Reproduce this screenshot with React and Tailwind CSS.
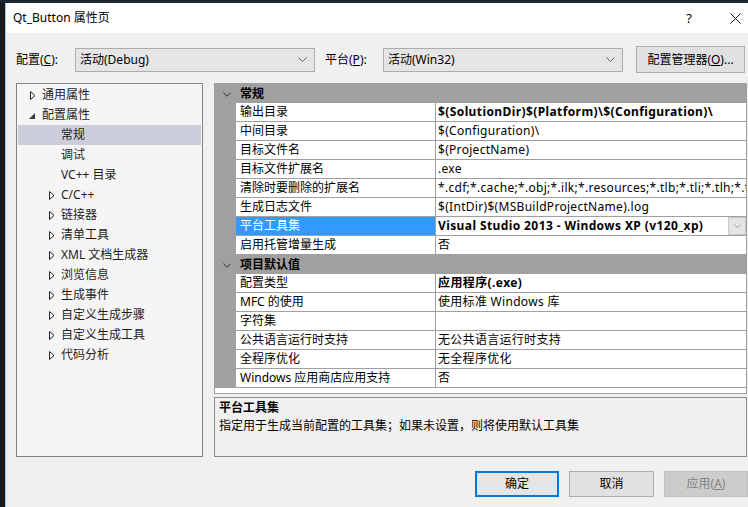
import React from "react";

const FONT = { fontFamily: '"Noto Sans", "Noto Sans CJK SC", sans-serif' };

function RightArrow() {
  return (
    <svg width="6" height="9" viewBox="0 0 6 9">
      <path d="M0.5 0.5 L5 4.5 L0.5 8.5 Z" fill="none" stroke="#262626" strokeWidth="1" />
    </svg>
  );
}

function DownArrow() {
  return (
    <svg width="6" height="6" viewBox="0 0 6 6">
      <path d="M6 0 L6 6 L0 6 Z" fill="#3c3c3c" />
    </svg>
  );
}

function Chevron({ color = "#606060", w = 9, h = 5 }) {
  return (
    <svg width={w} height={h} viewBox="0 0 9 5">
      <path d="M0.5 0.5 L4.5 4.5 L8.5 0.5" fill="none" stroke={color} strokeWidth="1" />
    </svg>
  );
}

const treeItems = [
  { level: 0, arrow: "right", text: "通用属性" },
  { level: 0, arrow: "down", text: "配置属性" },
  { level: 1, text: "常规", selected: true },
  { level: 1, text: "调试" },
  { level: 1, text: "VC++ 目录" },
  { level: 1, arrow: "right", text: "C/C++" },
  { level: 1, arrow: "right", text: "链接器" },
  { level: 1, arrow: "right", text: "清单工具" },
  { level: 1, arrow: "right", text: "XML 文档生成器" },
  { level: 1, arrow: "right", text: "浏览信息" },
  { level: 1, arrow: "right", text: "生成事件" },
  { level: 1, arrow: "right", text: "自定义生成步骤" },
  { level: 1, arrow: "right", text: "自定义生成工具" },
  { level: 1, arrow: "right", text: "代码分析" },
];

const groups = [
  {
    title: "常规",
    rows: [
      { name: "输出目录", value: "$(SolutionDir)$(Platform)\\$(Configuration)\\", bold: true },
      { name: "中间目录", value: "$(Configuration)\\" },
      { name: "目标文件名", value: "$(ProjectName)" },
      { name: "目标文件扩展名", value: ".exe" },
      {
        name: "清除时要删除的扩展名",
        value:
          "*.cdf;*.cache;*.obj;*.ilk;*.resources;*.tlb;*.tli;*.tlh;*.tmp;*.rsp;*.pgc;*.pgd;*.meta;$(TargetPath)",
      },
      { name: "生成日志文件", value: "$(IntDir)$(MSBuildProjectName).log" },
      { name: "平台工具集", value: "Visual Studio 2013 - Windows XP (v120_xp)", bold: true, selected: true },
      { name: "启用托管增量生成", value: "否" },
    ],
  },
  {
    title: "项目默认值",
    rows: [
      { name: "配置类型", value: "应用程序(.exe)", bold: true },
      { name: "MFC 的使用", value: "使用标准 Windows 库" },
      { name: "字符集", value: "" },
      { name: "公共语言运行时支持", value: "无公共语言运行时支持" },
      { name: "全程序优化", value: "无全程序优化" },
      { name: "Windows 应用商店应用支持", value: "否" },
    ],
  },
];

function Select({ text }) {
  return (
    <div className="w-[240px] h-[24px] bg-[#e5e5e5] border border-[#acacac] flex items-center pl-[4px] pr-[7px]">
      <span className="flex-1 text-[12px] leading-[18px] text-black">{text}</span>
      <Chevron />
    </div>
  );
}

function TreeRow({ item }) {
  return (
    <div
      className={
        "h-[20px] flex items-center " + (item.selected ? "bg-[#cccedb]" : "")
      }
    >
      <div className={item.level === 0 ? "w-[10px] shrink-0" : "w-[29px] shrink-0"} />
      <div className="w-[14px] shrink-0 flex items-center">
        {item.arrow === "right" && (
          <span className="pl-[2px] flex">
            <RightArrow />
          </span>
        )}
        {item.arrow === "down" && (
          <span className="pl-[1px] pt-[1px] flex">
            <DownArrow />
          </span>
        )}
      </div>
      <span className="text-[12px] leading-[18px] text-[#1e1e1e] whitespace-nowrap">{item.text}</span>
    </div>
  );
}

function GroupHeader({ title }) {
  return (
    <div className="h-[19px] bg-[#a0a0a0] flex items-center shrink-0">
      <div className="w-[21px] flex justify-center pl-[2px] pt-[1px]">
        <Chevron color="#1e1e1e" w={8} h={5} />
      </div>
      <span className="pl-[4px] text-[12px] leading-[18px] font-bold text-black">{title}</span>
    </div>
  );
}

function PropRow({ row }) {
  return (
    <div className="h-[19px] flex shrink-0">
      <div className="w-[21px] bg-[#a0a0a0] shrink-0" />
      <div
        className={
          "w-[200px] shrink-0 border-b border-r border-[#a0a0a0] flex items-center pl-[4px] overflow-hidden " +
          (row.selected ? "bg-[#3399ff] text-white" : "bg-white text-black")
        }
      >
        <span className="text-[12px] leading-[18px] whitespace-nowrap">{row.name}</span>
      </div>
      <div className="flex-1 min-w-0 border-b border-[#a0a0a0] bg-white flex items-center pl-[2px] overflow-hidden">
        <span
          className={
            "flex-1 min-w-0 text-[12px] leading-[18px] whitespace-nowrap overflow-hidden text-black " +
            (row.bold ? "font-bold tracking-[0.4px]" : "tracking-[0.3px]")
          }
        >
          {row.value}
        </span>
        {row.selected && (
          <div className="w-[18px] h-[18px] shrink-0 bg-[#e5e5e5] border border-[#c8c8c8] flex items-center justify-center">
            <Chevron color="#8a8a8a" w={7} h={4} />
          </div>
        )}
      </div>
    </div>
  );
}

export default function App() {
  return (
    <div className="w-[748px] h-[507px] overflow-hidden bg-[#1c2733] flex flex-col" style={FONT}>
      <div className="h-[3px] shrink-0 bg-[#1c2733]" />
      <div className="flex-1 flex min-h-0">
        <div className="w-[5px] shrink-0 bg-[#1b1b1b]" />
        <div className="flex-1 flex flex-col bg-[#f0f0f0] border-l border-[#9dc6ea] min-w-0">
          {/* title bar */}
          <div className="h-[30px] shrink-0 bg-white flex items-center">
            <span className="pl-[7px] text-[12px] leading-[18px] text-black flex-1">Qt_Button 属性页</span>
            <span className="text-[13px] leading-[18px] text-black">?</span>
            <svg className="ml-[38px] mr-[7px]" width="11" height="11" viewBox="0 0 11 11">
              <path d="M0.5 0.5 L10.5 10.5 M10.5 0.5 L0.5 10.5" stroke="#1e1e1e" strokeWidth="1" />
            </svg>
          </div>

          {/* config row */}
          <div className="mt-[13px] h-[27px] shrink-0 flex items-center pl-[10px] text-[12px] leading-[18px] text-black">
            <span className="w-[59px]">
              配置(<span className="underline">C</span>):
            </span>
            <Select text="活动(Debug)" />
            <span className="w-[58px] ml-[10px]">
              平台(<span className="underline">P</span>):
            </span>
            <Select text="活动(Win32)" />
            <div className="ml-[13px] w-[109px] h-[27px] bg-[#e1e1e1] border border-[#adadad] flex items-center justify-center">
              配置管理器(<span className="underline">O</span>)...
            </div>
          </div>

          {/* main */}
          <div className="mt-[10px] h-[374px] shrink-0 flex pl-[10px]">
            <div className="w-[187px] shrink-0 h-full border border-[#828282] bg-[#f5f5f5] pt-px px-px">
              {treeItems.map((it, i) => (
                <TreeRow key={i} item={it} />
              ))}
            </div>
            <div className="ml-[11px] w-[533px] shrink-0 flex flex-col">
              <div className="h-[311px] shrink-0 border border-[#a0a0a0] bg-white flex flex-col overflow-hidden">
                {groups.map((g, gi) => (
                  <React.Fragment key={gi}>
                    <GroupHeader title={g.title} />
                    {g.rows.map((r, ri) => (
                      <PropRow key={ri} row={r} />
                    ))}
                  </React.Fragment>
                ))}
              </div>
              <div className="mt-[3px] h-[60px] shrink-0 border border-[#8c8c8c] bg-[#f0f0f0] px-[4px] pt-[1px] text-[12px] leading-[18px] text-black">
                <div className="font-bold">平台工具集</div>
                <div>指定用于生成当前配置的工具集；如果未设置，则将使用默认工具集</div>
              </div>
            </div>
          </div>

          {/* buttons */}
          <div className="mt-[14px] h-[26px] shrink-0 flex justify-end gap-[10px] text-[12px] leading-[18px]">
            <div className="w-[84px] h-[26px] bg-[#e5e5e5] border-2 border-[#0078d7] flex items-center justify-center text-black">
              确定
            </div>
            <div className="w-[85px] h-[26px] bg-[#e1e1e1] border border-[#adadad] flex items-center justify-center text-black">
              取消
            </div>
            <div className="w-[84px] h-[26px] bg-[#cccccc] border border-[#bfbfbf] flex items-center justify-center text-[#838383]">
              应用(<span className="underline">A</span>)
            </div>
          </div>
        </div>
      </div>
    </div>
  );
}
